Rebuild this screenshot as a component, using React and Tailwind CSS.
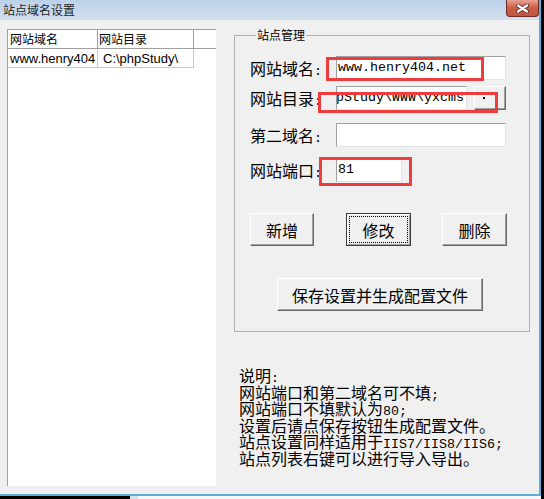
import React from "react";

const cjk = "font-['Noto_Sans_CJK_SC','Noto_Sans',sans-serif]";
const mono = "font-['Liberation_Mono','Noto_Sans_CJK_SC',monospace]";

const raised =
  "border border-t-white border-l-white border-r-[#696969] border-b-[#696969] shadow-[inset_-1px_-1px_0_#a0a0a0] bg-[#f0f0f0]";
const sunken =
  "border border-t-[#a0a0a0] border-l-[#a0a0a0] border-r-[#e3e3e3] border-b-[#e3e3e3] bg-white";

// ascii bits render half-width like the original bitmap font
const M = ({ children }) => <span className={`${mono} text-[13.33px] leading-none`}>{children}</span>;

const Field = ({ label, className = "", children }) => (
  <div className={`flex items-center h-[24px] ${className}`}>
    <span className="w-[86px] mt-[3px] text-[16px] leading-[16px] text-black whitespace-nowrap">
      {label}
      <M>:</M>
    </span>
    {children}
  </div>
);

const Input = ({ width, value, scrolled }) => (
  <div
    className={`${sunken} h-[24px] flex items-center overflow-hidden whitespace-nowrap ${
      scrolled ? "justify-end pr-[2px]" : "pl-[1px]"
    } ${mono} text-[13.33px] leading-none text-black`}
    style={{ width }}
  >
    {value}
  </div>
);

const Button = ({ label, width, focused }) => (
  <div
    className={`relative h-[33px] flex items-center justify-center text-[16px] leading-none text-black ${
      focused
        ? "border border-[#3c3c3c] bg-[#f0f0f0] shadow-[inset_1px_1px_0_#fff,inset_-1px_-1px_0_#a0a0a0]"
        : raised
    }`}
    style={{ width }}
  >
    {focused && <span className="absolute inset-[2px] border border-dotted border-black" />}
    {label}
  </div>
);

const CloseButton = () => (
  <div className="w-[33px] h-[17px] rounded-b-[4px] border border-t-0 border-[#6b2b26] bg-linear-to-b from-[#e6a291] via-[#cc5a44] to-[#c4543e] flex items-center justify-center">
    <svg width="13" height="9" viewBox="0 0 13 9">
      <path d="M2 1.5 L11 7.5 M11 1.5 L2 7.5" stroke="#5a3434" strokeWidth="4" strokeLinecap="round" />
      <path d="M2 1.5 L11 7.5 M11 1.5 L2 7.5" stroke="#ffffff" strokeWidth="2.2" strokeLinecap="round" />
    </svg>
  </div>
);

const SiteList = () => (
  <div className="ml-[7px] mt-[9px] w-[209px] h-[457px] bg-white border-t border-l border-[#a0a0a0] overflow-hidden">
    <div className="flex h-[19px] border-b border-[#a0a0a0] text-[12px] leading-none text-black">
      <div className="w-[90px] border-r border-[#a0a0a0] pl-[2px] flex items-center">网站域名</div>
      <div className="w-[96px] border-r border-[#a0a0a0] pl-[1px] flex items-center">网站目录</div>
    </div>
    <div className="flex h-[19px] font-['Liberation_Sans',sans-serif] text-[13px] leading-none text-black">
      <div className="w-[90px] border-r border-b border-[#c8c8c8] pl-[2px] flex items-center overflow-hidden whitespace-nowrap">
        www.henry404
      </div>
      <div className="w-[96px] border-r border-b border-[#c8c8c8] pl-[5px] flex items-center overflow-hidden whitespace-nowrap">
        C:\phpStudy\
      </div>
    </div>
  </div>
);

const notes = [
  <>说明<M>:</M></>,
  <>网站端口和第二域名可不填<M>;</M></>,
  <>网站端口不填默认为<M>80;</M></>,
  <>设置后请点保存按钮生成配置文件。</>,
  <>站点设置同样适用于<M>IIS7/IIS8/IIS6;</M></>,
  <>站点列表右键可以进行导入导出。</>,
];

export default function App() {
  return (
    <div className={`w-[544px] h-[499px] bg-black overflow-hidden flex flex-col ${cjk}`}>
      <div className="relative w-[541px] h-[496px] bg-[#f0f0f0] border-r-2 border-b-2 border-[#5eaed9] flex flex-col">
        {/* title bar */}
        <div className="h-[20px] shrink-0 bg-linear-to-b from-[#bcd1ea] to-[#d2e0ef] flex justify-between">
          <span className="pl-[3px] pt-[3px] text-[12px] leading-[14px] text-[#1e1e1e]">站点域名设置</span>
          <CloseButton />
        </div>

        <div className="flex flex-1">
          <SiteList />

          <div className="ml-[18px] mt-[8px] flex flex-col">
            <fieldset className="w-[296px] border border-[#b0b0b0] pl-[15px] pt-[14px] pb-[20px]">
              <legend className="ml-[6px] px-[1px] text-[12px] leading-[14px] text-black">站点管理</legend>

              <Field label="网站域名">
                <Input width={170} value="www.henry404.net" />
              </Field>
              <Field label="网站目录" className="mt-[6px]">
                <Input width={131} value="C:\phpStudy\WWW\yxcms" scrolled />
                <div className={`${raised} ml-[7px] w-[32px] h-[24px] flex items-center justify-center`}>
                  <span className="w-[2px] h-[2px] bg-black mr-[12px] mb-[1px]" />
                </div>
              </Field>
              <Field label="第二域名" className="mt-[13px]">
                <Input width={170} value="" />
              </Field>
              <Field label="网站端口" className="mt-[11px]">
                <Input width={66} value="81" />
              </Field>

              <div className="flex mt-[31px]">
                <Button label="新增" width={64} />
                <div className="ml-[32px]">
                  <Button label="修改" width={65} focused />
                </div>
                <div className="ml-[31px]">
                  <Button label="删除" width={65} />
                </div>
              </div>

              <div className="mt-[32px] ml-[27px]">
                <Button label="保存设置并生成配置文件" width={206} />
              </div>
            </fieldset>

            <div className="mt-[35px] ml-[5px] text-[16px] text-black whitespace-nowrap">
              {notes.map((line, i) => (
                <div key={i} className="h-[16.5px] leading-[16.5px]">
                  {line}
                </div>
              ))}
            </div>
          </div>
        </div>

        {/* red annotation boxes drawn over the form */}
        <div className="absolute left-[326px] top-[57px] w-[158px] h-[24px] border-[3px] border-[#f03c3c]" />
        <div className="absolute left-[318px] top-[92px] w-[180px] h-[21px] border-[3px] border-[#f03c3c]" />
        <div className="absolute left-[319px] top-[157px] w-[93px] h-[29px] border-[3px] border-[#f03c3c]" />
      </div>

      <div className="flex h-[3px] w-[541px]">
        <div className="w-[130px] bg-black" />
        <div className="w-[8px] bg-[#d6e2ee]" />
        <div className="flex-1 bg-[#f4f7fb]" />
      </div>
    </div>
  );
}
